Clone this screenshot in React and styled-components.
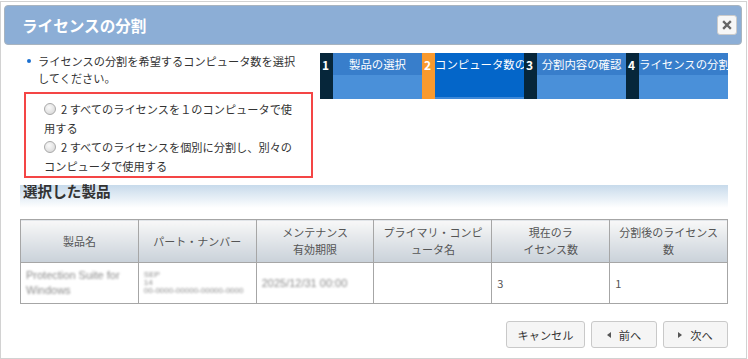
import React from "react";
import styled, { createGlobalStyle } from "styled-components";

const Global = createGlobalStyle`
  html, body { margin: 0; padding: 0; background: #fff; }
  body { font-family: "Noto Sans CJK JP", "Noto Sans", sans-serif; color: #333; }
  * { box-sizing: border-box; }
`;

const Dialog = styled.div`
  margin-top: 1px;
  width: 747px;
  height: 358px;
  border: 1px solid #d2d2d2;
  background: #fff;
`;

const TitleBar = styled.div`
  margin: 3px 0 0 3px;
  width: 738px;
  height: 40px;
  border: 1px solid #a8b4c0;
  border-radius: 4px;
  background: #8caed6;
  display: flex;
  align-items: center;
  justify-content: space-between;
  padding: 0 4px 0 17px;
`;

const Title = styled.div`
  color: #fff;
  font-weight: 700;
  font-size: 15.6px;
  line-height: 20px;
`;

const CloseButton = styled.button`
  width: 20px;
  height: 20px;
  padding: 0;
  border: 1px solid #cbcbcb;
  border-radius: 3px;
  background: #f7f7f7;
  display: flex;
  align-items: center;
  justify-content: center;
`;

const Content = styled.div`
  margin-left: 19px;
  width: 708px;
`;

const TopRow = styled.div`
  margin-top: 8px;
  display: flex;
  align-items: flex-start;
`;

const LeftCol = styled.div`
  width: 300px;
`;

const Instruction = styled.div`
  position: relative;
  padding-left: 18px;
  padding-right: 20px;
  font-size: 11.2px;
  line-height: 17px;
  color: #333;
  &::before {
    content: "";
    position: absolute;
    left: 7px;
    top: 6px;
    width: 4px;
    height: 4px;
    border-radius: 50%;
    background: #1a6fd0;
  }
`;

const RadioBox = styled.div`
  margin: 5px 0 0 4px;
  width: 289px;
  height: 86px;
  border: 2px solid #f44545;
  padding: 5.5px 12px 0 18px;
`;

const RadioLabel = styled.label`
  display: block;
  font-size: 11.2px;
  line-height: 19px;
  color: #333;
`;

const RadioDot = styled.span`
  display: inline-block;
  width: 12px;
  height: 12px;
  border-radius: 50%;
  border: 1px solid #a9a9a9;
  background: radial-gradient(circle at 40% 35%, #fafafa 0%, #dedede 70%, #cfcfcf 100%);
  vertical-align: -1px;
  margin-right: 5px;
`;

const Steps = styled.div`
  display: flex;
  width: 408px;
  height: 46px;
`;

const StepNum = styled.div`
  width: 13px;
  flex: none;
  background: ${(p) => (p.$active ? "#f99a2e" : "#06263a")};
  color: #fff;
  font-weight: 700;
  font-size: 12px;
  line-height: 14px;
  padding: 5px 0 0 2px;
`;

const StepLabel = styled.div`
  width: 89px;
  flex: none;
  overflow: hidden;
  white-space: nowrap;
  text-align: center;
  color: #fff;
  font-size: 11.4px;
  line-height: 22px;
  background: ${(p) =>
    p.$active
      ? "linear-gradient(to bottom, #0466c9 0, #0466c9 44px, #3d88d8 44px)"
      : "linear-gradient(to bottom, #387ecb 0, #387ecb 22px, #4a90d9 22px)"};
`;

const Heading = styled.div`
  margin-top: 3px;
  height: 27px;
  padding-left: 3px;
  font-size: 14.6px;
  font-weight: 700;
  line-height: 20px;
  color: #333;
  background: linear-gradient(to bottom, transparent 0, transparent 4px, #c7daeb 4px, #ffffff 100%);
`;

const Table = styled.table`
  margin-top: 11px;
  width: 708px;
  table-layout: fixed;
  border-collapse: collapse;
  border: 1px solid #a6a6a6;
`;

const Th = styled.th`
  height: 43px;
  border: 1px solid #a6a6a6;
  background: linear-gradient(to bottom, #f8f8f8, #c9d1d9);
  font-weight: 400;
  font-size: 11px;
  line-height: 17px;
  color: #555;
  text-align: center;
  padding: 0 7px;
`;

const Td = styled.td`
  height: 41px;
  border: 1px solid #a6a6a6;
  font-size: 11px;
  line-height: 15px;
  color: #555;
  text-align: left;
  vertical-align: middle;
  padding: 0 5px;
`;

const Blurred = styled.div`
  color: #8c8c8c;
  filter: blur(1.3px);
  font-family: "Liberation Sans", sans-serif;
  font-size: ${(p) => p.$size || 11}px;
  line-height: ${(p) => p.$lh || 15}px;
  white-space: nowrap;
`;

const ButtonRow = styled.div`
  margin-top: 17px;
  display: flex;
  justify-content: flex-end;
  gap: 6px;
`;

const Button = styled.button`
  width: ${(p) => p.$w}px;
  height: 27px;
  border: 1px solid #c9c9c9;
  border-radius: 3px;
  background: #f5f5f5;
  font-family: "Noto Sans CJK JP", sans-serif;
  font-size: 11.2px;
  color: #333;
  display: flex;
  align-items: center;
  justify-content: center;
  gap: 8px;
  padding: 0;
`;

const Tri = styled.span`
  width: 0;
  height: 0;
  border-top: 3.5px solid transparent;
  border-bottom: 3.5px solid transparent;
  ${(p) => (p.$dir === "left" ? "border-right: 4px solid #555;" : "border-left: 4px solid #555;")}
`;

const steps = [
  { n: 1, label: "製品の選択" },
  { n: 2, label: "コンピュータ数の選択", active: true },
  { n: 3, label: "分割内容の確認" },
  { n: 4, label: "ライセンスの分割" },
];

export default function App() {
  return (
    <>
      <Global />
      <Dialog>
        <TitleBar>
          <Title>ライセンスの分割</Title>
          <CloseButton aria-label="close">
            <svg width="10" height="10" viewBox="0 0 10 10">
              <path d="M2 2 L8 8 M8 2 L2 8" stroke="#666" strokeWidth="2.4" strokeLinecap="square" />
            </svg>
          </CloseButton>
        </TitleBar>
        <Content>
          <TopRow>
            <LeftCol>
              <Instruction>ライセンスの分割を希望するコンピュータ数を選択してください。</Instruction>
              <RadioBox>
                <RadioLabel>
                  <RadioDot />2 すべてのライセンスを１のコンピュータで使用する
                </RadioLabel>
                <RadioLabel>
                  <RadioDot />2 すべてのライセンスを個別に分割し、別々のコンピュータで使用する
                </RadioLabel>
              </RadioBox>
            </LeftCol>
            <Steps>
              {steps.map((s) => (
                <React.Fragment key={s.n}>
                  <StepNum $active={s.active}>{s.n}</StepNum>
                  <StepLabel $active={s.active}>{s.label}</StepLabel>
                </React.Fragment>
              ))}
            </Steps>
          </TopRow>
          <Heading>選択した製品</Heading>
          <Table>
            <thead>
              <tr>
                <Th>製品名</Th>
                <Th>パート・ナンバー</Th>
                <Th>メンテナンス<br />有効期限</Th>
                <Th>プライマリ・コンピュータ名</Th>
                <Th>現在のラ<br />イセンス数</Th>
                <Th>分割後のライセンス数</Th>
              </tr>
            </thead>
            <tbody>
              <tr>
                <Td>
                  <Blurred>Protection Suite for</Blurred>
                  <Blurred>Windows</Blurred>
                </Td>
                <Td>
                  <Blurred $size={8} $lh={8}>SEP</Blurred>
                  <Blurred $size={8} $lh={8}>14</Blurred>
                  <Blurred $size={8} $lh={8}>00-0000-00000-00000-0000</Blurred>
                </Td>
                <Td>
                  <Blurred>2025/12/31 00:00</Blurred>
                </Td>
                <Td></Td>
                <Td>3</Td>
                <Td>1</Td>
              </tr>
            </tbody>
          </Table>
          <ButtonRow>
            <Button $w={79}>キャンセル</Button>
            <Button $w={66}>
              <Tri $dir="left" />前へ
            </Button>
            <Button $w={65}>
              <Tri $dir="right" />次へ
            </Button>
          </ButtonRow>
        </Content>
      </Dialog>
    </>
  );
}
